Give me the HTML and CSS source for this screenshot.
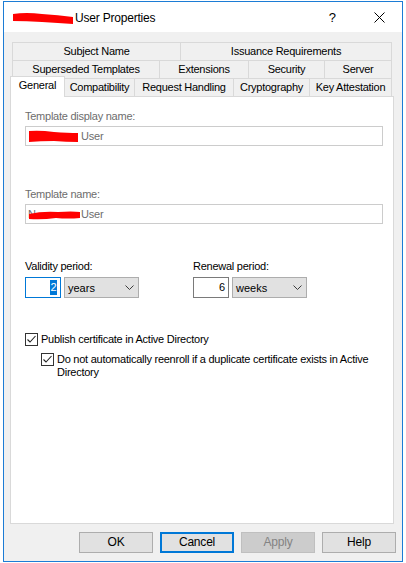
FILE: index.html
```html
<!DOCTYPE html>
<html>
<head>
<meta charset="utf-8">
<link rel="stylesheet" href="styles.css">
</head>
<body>
<div class="window">
  <div class="titlebar">
    <svg class="title-redact" width="62" height="13" viewBox="0 0 62 13"><path d="M1 2 Q14 0 30 2 Q46 3 61 5 L61 12 Q46 11 30 10 Q14 9 1 9 Z" fill="#f00"/></svg>
    <span class="title">User Properties</span>
    <span class="help">?</span>
    <svg class="close" width="11" height="11" viewBox="0 0 11 11"><path d="M0.5 0.5 L10.5 10.5 M10.5 0.5 L0.5 10.5" stroke="#000" stroke-width="1"/></svg>
  </div>
  <div class="client">
    <div class="tabs">
      <div class="tabrow">
        <div class="tab t-subject">Subject Name</div>
        <div class="tab t-issuance">Issuance Requirements</div>
      </div>
      <div class="tabrow">
        <div class="tab t-superseded">Superseded Templates</div>
        <div class="tab t-extensions">Extensions</div>
        <div class="tab t-security">Security</div>
        <div class="tab t-server">Server</div>
      </div>
      <div class="tabrow front">
        <div class="tab selected t-general">General</div>
        <div class="tab t-compat">Compatibility</div>
        <div class="tab t-request">Request Handling</div>
        <div class="tab t-crypto">Cryptography</div>
        <div class="tab t-key">Key Attestation</div>
      </div>
    </div>
    <div class="panel">
      <div class="label disabled first">Template display name:</div>
      <div class="textbox">
        <svg class="redact" width="51" height="13" viewBox="0 0 51 13"><path d="M1 1 Q12 0 26 2 Q40 3 50 3 L50 12 Q38 12 26 11 Q12 11 1 12 Z" fill="#f00"/></svg>
        <span class="tb-text">User</span>
      </div>
      <div class="label disabled second">Template name:</div>
      <div class="textbox">
        <span class="ghost">N</span>
        <svg class="redact r2" width="53" height="10" viewBox="0 0 53 10"><path d="M1 4 Q14 1 30 2 Q44 1 52 2 L52 8 Q40 9 28 8 Q14 10 1 9 Z" fill="#f00"/></svg>
        <span class="tb-text tight">User</span>
      </div>
      <div class="periods">
        <div class="period">
          <div class="label">Validity period:</div>
          <div class="controls">
            <div class="num focused"><span class="sel">2</span></div>
            <div class="combo w-years"><span>years</span><svg width="9" height="5" viewBox="0 0 9 5"><polyline points="0.5,0.5 4.5,4.5 8.5,0.5" fill="none" stroke="#3c3c3c" stroke-width="1"/></svg></div>
          </div>
        </div>
        <div class="period">
          <div class="label">Renewal period:</div>
          <div class="controls">
            <div class="num"><span>6</span></div>
            <div class="combo w-weeks"><span>weeks</span><svg width="9" height="5" viewBox="0 0 9 5"><polyline points="0.5,0.5 4.5,4.5 8.5,0.5" fill="none" stroke="#3c3c3c" stroke-width="1"/></svg></div>
          </div>
        </div>
      </div>
      <div class="check c1">
        <svg class="box" width="13" height="13" viewBox="0 0 13 13"><rect x="0.5" y="0.5" width="12" height="12" fill="#fff" stroke="#333"/><polyline points="2.5,6.5 5,9 10.5,3" fill="none" stroke="#222" stroke-width="1.1"/></svg>
        <span class="check-label">Publish certificate in Active Directory</span>
      </div>
      <div class="check c2">
        <svg class="box" width="13" height="13" viewBox="0 0 13 13"><rect x="0.5" y="0.5" width="12" height="12" fill="#fff" stroke="#333"/><polyline points="2.5,6.5 5,9 10.5,3" fill="none" stroke="#222" stroke-width="1.1"/></svg>
        <span class="check-label">Do not automatically reenroll if a duplicate certificate exists in Active Directory</span>
      </div>
    </div>
    <div class="buttons">
      <div class="btn">OK</div>
      <div class="btn default">Cancel</div>
      <div class="btn off">Apply</div>
      <div class="btn">Help</div>
    </div>
  </div>
</div>
</body>
</html>
```
FILE: styles.css
```css
* { box-sizing: border-box; }
html, body { margin: 0; padding: 0; background: #ffffff; }
body {
  font-family: "Liberation Sans", Arial, sans-serif;
  font-size: 11px;
  color: #000;
}
.window {
  margin: 1px 0 0 3px;
  width: 400px;
  height: 561px;
  border: 1px solid #1c7cd5;
  background: #f0f0f0;
  display: flex;
  flex-direction: column;
}
.titlebar {
  height: 30px;
  background: #fff;
  display: flex;
  align-items: center;
  padding-left: 8px;
  flex: none;
}
.title-redact { flex: none; margin-top: 2px; }
.title {
  font-size: 12px;
  margin-left: 1px;
  margin-top: 1px;
  letter-spacing: -0.2px;
}
.help {
  margin-left: auto;
  font-size: 13px;
  margin-right: 38px;
}
.close { margin-right: 17px; flex: none; }
.client { flex: 1; display: flex; flex-direction: column; }
.tabs {
  margin: 10px 0 0 6px;
  width: 384px;
  height: 54px;
  flex: none;
}
.tabrow {
  display: flex;
  height: 18px;
  margin-left: 2px;
}
.tabrow.front { margin-left: 0; align-items: flex-start; }
.tab {
  height: 18px;
  border: 1px solid #d9d9d9;
  border-bottom: none;
  background: #f0f0f0;
  text-align: center;
  line-height: 17px;
  white-space: nowrap;
  margin-left: -1px;
  letter-spacing: -0.25px;
}
.tab:first-child { margin-left: 0; }
.tab.selected {
  background: #fff;
  height: 21px;
  margin-top: -2px;
  line-height: 17px;
  position: relative;
  z-index: 2;
}
.t-subject { width: 169px; }
.t-issuance { width: 212px; }
.t-superseded { width: 148px; }
.t-extensions { width: 90px; }
.t-security { width: 77px; }
.t-server { width: 68px; }
.t-general { width: 55px; }
.t-compat { width: 71px; }
.t-request { width: 100px; }
.t-crypto { width: 77px; }
.t-key { width: 83px; }
.panel {
  width: 384px;
  height: 428px;
  margin-left: 6px;
  background: #fff;
  border: 1px solid #d9d9d9;
  padding: 0 0 0 14px;
  flex: none;
  position: relative;
  z-index: 1;
}
.label {
  line-height: 13px;
  height: 13px;
  white-space: nowrap;
  letter-spacing: -0.25px;
}
.label.disabled { color: #6d6d6d; }
.label.first { margin-top: 13px; }
.label.second { margin-top: 42px; }
.textbox {
  margin-top: 3px;
  width: 358px;
  height: 20px;
  border: 1px solid #cccccc;
  display: flex;
  align-items: center;
  padding-left: 2px;
  color: #6d6d6d;
}
.redact { flex: none; }
.tb-text { margin-left: 2px; letter-spacing: -0.2px; }
.ghost { color: #6d6d6d; width: 0; overflow: visible; }
.r2 { margin-left: 0; margin-top: 2px; }
.tb-text.tight { margin-left: 0; }
.periods {
  display: flex;
  margin-top: 36px;
}
.period { width: 168px; }
.controls {
  margin-top: 4px;
  display: flex;
  gap: 3px;
}
.num {
  width: 36px;
  height: 21px;
  border: 1px solid #7a7a7a;
  background: #fff;
  text-align: right;
  padding-right: 3px;
  line-height: 19px;
}
.num.focused { border-color: #0078d7; }
.sel {
  background: #0078d7;
  color: #fff;
  display: inline-block;
  line-height: 15px;
  padding: 0 0.5px;
}
.combo {
  height: 21px;
  border: 1px solid #adadad;
  background: #e1e1e1;
  display: flex;
  align-items: center;
  justify-content: space-between;
  padding: 0 4px 0 3px;
}
.combo svg { flex: none; margin-bottom: 1px; }
.w-years { width: 75px; }
.w-weeks { width: 75px; }
.check {
  display: flex;
  align-items: flex-start;
  line-height: 13px;
}
.check .box { flex: none; margin-right: 3px; margin-top: 0px; }
.check-label { letter-spacing: -0.25px; }
.c1 { margin-top: 35px; }
.c2 { margin-top: 7px; margin-left: 16px; width: 330px; }
.buttons {
  display: flex;
  gap: 7px;
  margin: 8px 0 0 75px;
}
.btn {
  width: 74px;
  height: 21px;
  border: 1px solid #adadad;
  background: #e1e1e1;
  text-align: center;
  line-height: 19px;
  font-size: 12px;
  letter-spacing: -0.2px;
}
.btn.default { border: 2px solid #0078d7; line-height: 17px; }
.btn.off { background: #cccccc; border-color: #bfbfbf; color: #838383; }
```
